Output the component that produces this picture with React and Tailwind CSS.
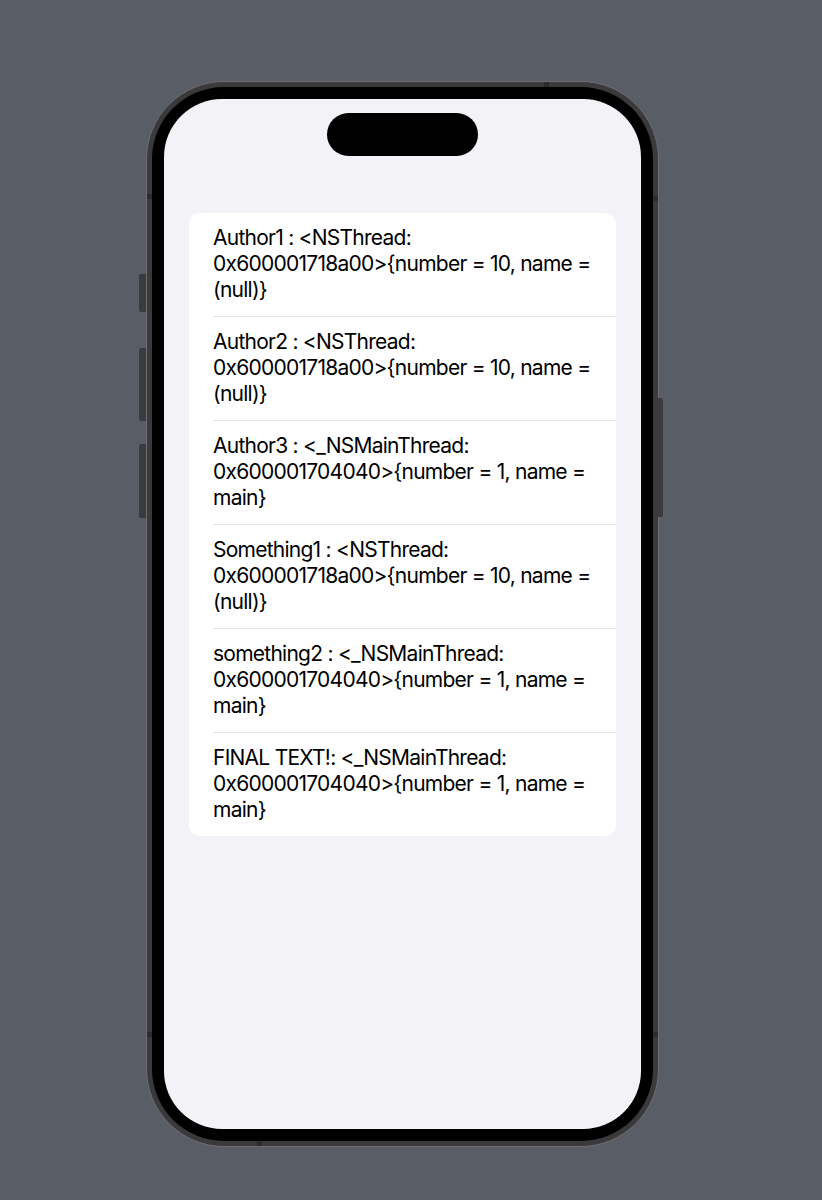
import React from "react";

// word joiner keeps "0x...>{number" together, the way the simulator wraps it
const WJ = "\u2060";

const rows = [
  `Author1 : <NSThread: 0x600001718a00>${WJ}{number = 10, name = (null)}`,
  `Author2 : <NSThread: 0x600001718a00>${WJ}{number = 10, name = (null)}`,
  `Author3 : <_NSMainThread: 0x600001704040>${WJ}{number = 1, name = main}`,
  `Something1 : <NSThread: 0x600001718a00>${WJ}{number = 10, name = (null)}`,
  `something2 : <_NSMainThread: 0x600001704040>${WJ}{number = 1, name = main}`,
  `FINAL TEXT!: <_NSMainThread: 0x600001704040>${WJ}{number = 1, name = main}`,
];

export default function App() {
  return (
    <div className="w-[822px] h-[1200px] bg-[#595d65] pt-[81px] pl-[146px] font-['Inter',sans-serif]">
      {/* phone frame */}
      <div className="relative w-[513px] h-[1066px] rounded-[78px] border border-[#6f6f72] bg-[#3a3a3c] p-[5px]">
        {/* side buttons */}
        <span className="absolute left-[-8px] top-[192px] w-[7px] h-[38px] rounded-l-[2px] bg-[#393b3f]" />
        <span className="absolute left-[-8px] top-[266px] w-[7px] h-[73px] rounded-l-[2px] bg-[#393b3f]" />
        <span className="absolute left-[-8px] top-[362px] w-[7px] h-[74px] rounded-l-[2px] bg-[#393b3f]" />
        <span className="absolute right-[-5px] top-[316px] w-[5px] h-[119px] rounded-r-[2px] bg-[#393b3f]" />
        {/* antenna bands */}
        <span className="absolute top-0 left-[397px] w-[5px] h-[5px] bg-[#2c2c2e]" />
        <span className="absolute left-0 top-[112px] w-[5px] h-[5px] bg-[#2c2c2e]" />
        <span className="absolute right-0 top-[114px] w-[5px] h-[5px] bg-[#2c2c2e]" />
        <span className="absolute left-0 top-[950px] w-[5px] h-[5px] bg-[#2c2c2e]" />
        <span className="absolute right-0 top-[950px] w-[5px] h-[5px] bg-[#2c2c2e]" />
        <span className="absolute bottom-0 left-[110px] w-[5px] h-[5px] bg-[#2c2c2e]" />

        <div className="w-full h-full rounded-[72px] bg-black p-[12px]">
          {/* screen */}
          <div className="w-full h-full rounded-[58px] bg-[#f2f2f7] pt-[14px] px-[25px] overflow-hidden">
            <div className="mx-auto w-[151px] h-[43px] rounded-full bg-black" />
            <div className="mt-[57px] bg-white rounded-[11px] overflow-hidden">
              {rows.map((text, i) => (
                <div key={i}>
                  {i > 0 && <div className="ml-[24px] h-px bg-[#e3e3e5]" />}
                  <div className="pl-[24px] pr-[20px] pt-[12px] pb-[13px] text-[21px] leading-[26px] tracking-[-0.75px] text-black">
                    {text}
                  </div>
                </div>
              ))}
            </div>
          </div>
        </div>
      </div>
    </div>
  );
}
